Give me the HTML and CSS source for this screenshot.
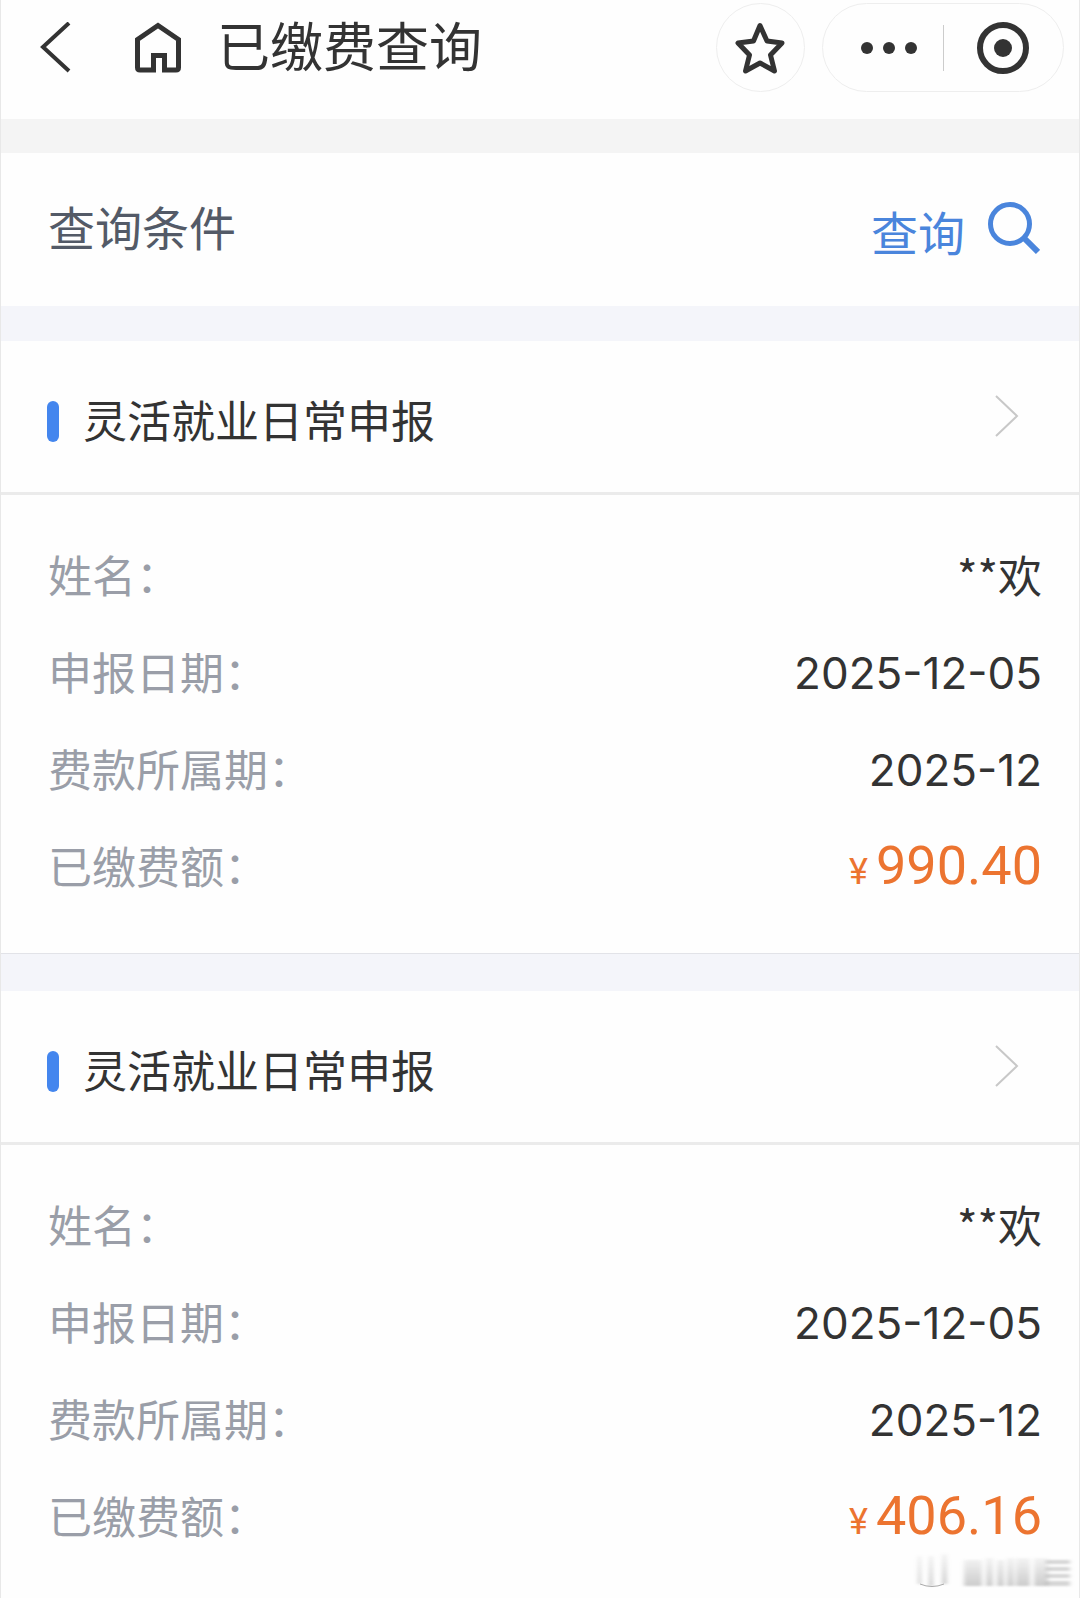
FILE: index.html
```html
<!DOCTYPE html>
<html lang="zh-CN">
<head>
<meta charset="utf-8">
<meta name="viewport" content="width=device-width, initial-scale=1">
<title>已缴费查询</title>
<link rel="stylesheet" href="styles.css">
</head>
<body>
<div class="page">
  <header class="navbar">
    <button class="icon-btn back" type="button" aria-label="返回">
      <svg width="32" height="52" viewBox="0 0 32 52" fill="none" stroke="#333" stroke-width="4"><path d="M30 1 4 25l26 24"/></svg>
    </button>
    <button class="icon-btn home" type="button" aria-label="首页">
      <svg width="48" height="52" viewBox="0 0 48 52" fill="none" stroke="#333" stroke-width="5" stroke-linejoin="round"><path d="M20 48H6q-2.500 0-2.500-2.500V17.500L24 3.500l20.500 14v28q0 2.500-2.500 2.500H29M19.500 50.500V33.500h11v17" stroke-linejoin="miter"/></svg>
    </button>
    <h1 class="nav-title">已缴费查询</h1>
    <button class="icon-btn star" type="button" aria-label="收藏">
      <svg width="52" height="52" viewBox="0 0 52 52" fill="none" stroke="#333" stroke-width="5" stroke-linejoin="round"><path d="M25 3.500l7 15.500 15 2-11.500 12 4 16L25 41l-14.500 8 4-16L3 21l15.500-2z"/></svg>
    </button>
    <div class="capsule">
      <button class="icon-btn" type="button" aria-label="更多">
        <svg width="58" height="12" viewBox="0 0 58 12" fill="#333"><circle cx="6" cy="6" r="6"/><circle cx="28" cy="6" r="6"/><circle cx="50" cy="6" r="6"/></svg>
      </button>
      <span class="capsule-line"></span>
      <button class="icon-btn" type="button" aria-label="关闭">
        <svg width="54" height="54" viewBox="0 0 54 54"><circle cx="27" cy="27" r="23" fill="none" stroke="#333" stroke-width="6"/><circle cx="27" cy="27" r="9" fill="#333"/></svg>
      </button>
    </div>
  </header>

  <section class="query">
    <h2 class="query-title">查询条件</h2>
    <button class="query-btn" type="button">
      <span class="query-text">查询</span>
      <svg width="52" height="56" viewBox="0 0 52 56" fill="none" stroke="#4a85dc" stroke-width="5"><circle cx="22" cy="22" r="19.500"/><path d="M36 36l14 14" stroke-width="6"/></svg>
    </button>
  </section>

  <main class="records">
    <article class="record">
      <a class="record-head" href="#record-1">
        <span class="marker"></span>
        <span class="record-title">灵活就业日常申报</span>
        <svg class="chevron" width="24" height="42" viewBox="0 0 24 42" fill="none" stroke="#c8c8c8" stroke-width="2"><path d="M1 1l21 20L1 41"/></svg>
      </a>
      <dl class="fields" id="record-1">
        <div class="field"><dt>姓名：</dt><dd>**欢</dd></div>
        <div class="field"><dt>申报日期：</dt><dd class="date">2025-12-05</dd></div>
        <div class="field"><dt>费款所属期：</dt><dd class="date">2025-12</dd></div>
        <div class="field"><dt>已缴费额：</dt><dd class="amount"><span class="yen">¥</span>990.40</dd></div>
      </dl>
    </article>
    <article class="record">
      <a class="record-head" href="#record-2">
        <span class="marker"></span>
        <span class="record-title">灵活就业日常申报</span>
        <svg class="chevron" width="24" height="42" viewBox="0 0 24 42" fill="none" stroke="#c8c8c8" stroke-width="2"><path d="M1 1l21 20L1 41"/></svg>
      </a>
      <dl class="fields" id="record-2">
        <div class="field"><dt>姓名：</dt><dd>**欢</dd></div>
        <div class="field"><dt>申报日期：</dt><dd class="date">2025-12-05</dd></div>
        <div class="field"><dt>费款所属期：</dt><dd class="date">2025-12</dd></div>
        <div class="field"><dt>已缴费额：</dt><dd class="amount"><span class="yen">¥</span>406.16</dd></div>
      </dl>
    </article>
  </main>

  <svg class="stamp" width="166" height="40" viewBox="0 0 166 40" aria-hidden="true">
    <defs>
      <linearGradient id="fade" x1="0" y1="0" x2="0" y2="1"><stop offset="0" stop-color="#999" stop-opacity="0.1"/><stop offset="1" stop-color="#999" stop-opacity=".5"/></linearGradient>
      <filter id="soft" x="-10%" y="-20%" width="120%" height="140%"><feGaussianBlur stdDeviation="2 1"/></filter>
    </defs>
    <g fill="url(#fade)" filter="url(#soft)">
      <path d="M8 4h3v28H8zM19 4h4v30h-4zM32 2h5v30h-5z"/>
      <path d="M54 8h18v26H54zM76 6h7v28h-7zM87 8h7v26h-7zM97 6h7v28h-7zM106 6h14v28h-14zM124 6h14v28h-14z"/>
      <path d="M136 8h24v4h-24zM136 15h24v4h-24zM136 22h24v4h-24zM136 29h24v5h-24z" fill="#999" fill-opacity=".4"/>
    </g>
    <path d="M10 32q12 5 24 0" fill="none" stroke="#aaa" stroke-width="1"/>
  </svg>
</div>
</body>
</html>
```
FILE: styles.css
```css
* {
  box-sizing: border-box;
}

body {
  margin: 0;
  background: #fff;
  color: #333;
  font-family: "Noto Sans CJK SC", sans-serif;
  font-size: 44px;
  line-height: 64px;
}

h1, h2, dl, dd {
  margin: 0;
  font-weight: 400;
}

button {
  padding: 0;
  border: 0;
  background: none;
  color: inherit;
  font: inherit;
}

svg {
  display: block;
  flex: none;
}

.page {
  position: relative;
  min-height: 100vh;
  overflow: hidden;
  border: solid #e8e8e8;
  border-width: 0 1px;
  background: #fefefe;
}

.navbar {
  display: flex;
  align-items: center;
  padding: 3px 15px 27px 38px;
}

.icon-btn {
  display: flex;
  align-items: center;
  justify-content: center;
}

.home {
  margin-left: 63px;
}

.nav-title {
  margin-left: 35px;
  padding-bottom: 8px;
  font-size: 53px;
}

.star {
  width: 89px;
  height: 89px;
  margin-left: auto;
  border: 1px solid #eee;
  border-radius: 50%;
}

.capsule {
  display: flex;
  align-items: center;
  justify-content: space-between;
  width: 242px;
  height: 89px;
  margin-left: 17px;
  padding: 0 33px 0 38px;
  border: 1px solid #eee;
  border-radius: 45px;
}

.capsule-line {
  width: 1px;
  height: 46px;
  margin-left: -8px;
  background: #ccc;
}

.query {
  display: flex;
  align-items: center;
  justify-content: space-between;
  height: 187px;
  padding: 0 39px 0 47px;
  border-top: 34px solid #f4f4f4;
}

.query-title,
.query-text {
  font-size: 47px;
}

.query-title {
  padding-bottom: 8px;
  color: #535a67;
}

.query-btn {
  display: flex;
  align-items: center;
  gap: 23px;
  color: #4a85dc;
}

.query-text {
  padding-top: 3px;
}

.record {
  border-top: 35px solid #f4f5fa;
}

.record + .record {
  margin-top: 1px;
  border-top-width: 37px;
  box-shadow: 0 -1px #e2e3e8;
}

.record-head {
  display: flex;
  align-items: center;
  height: 154px;
  padding: 0 60px 0 46px;
  border-bottom: 3px solid #ebebeb;
  color: inherit;
  text-decoration: none;
}

.marker {
  width: 12px;
  height: 41px;
  margin-top: 10px;
  border-radius: 6px;
  background: #4486ee;
}

.record-title {
  flex: 1;
  margin-left: 24px;
  padding-top: 4px;
}

.chevron {
  margin-bottom: 2px;
}

.fields {
  padding: 32px 37px 38px 47px;
}

.field {
  display: flex;
  align-items: center;
  justify-content: space-between;
  height: 97px;
  padding-bottom: 4px;
}

.field dt {
  color: #9a9ea8;
}

.field .date {
  padding-top: 4px;
  font-family: Inter, sans-serif;
}

.field .amount {
  padding-top: 8px;
  color: #ec7430;
  font-family: Roboto, sans-serif;
  font-size: 54px;
}

.yen {
  margin-right: 8px;
  font-size: 36px;
}

.stamp {
  position: absolute;
  right: 3px;
  bottom: 11px;
}
```
